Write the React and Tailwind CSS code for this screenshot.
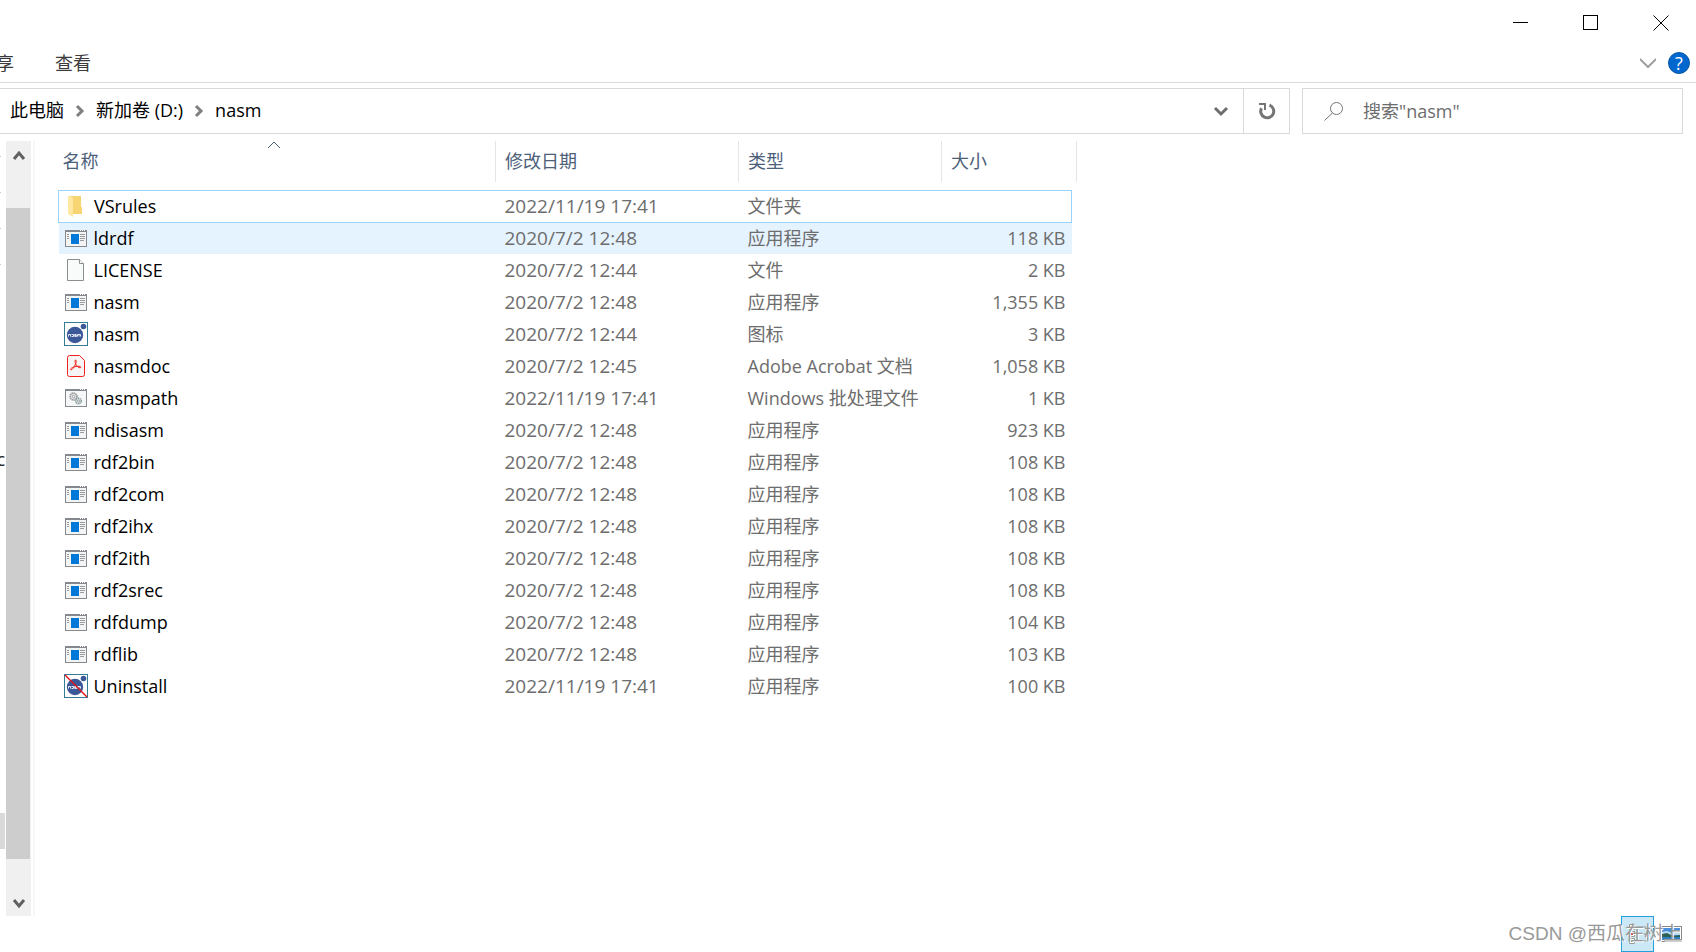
import React from 'react';

const files = [
  { name: 'VSrules', date: '2022/11/19 17:41', type: '文件夹', size: '', icon: 'folder', state: 'focused' },
  { name: 'ldrdf', date: '2020/7/2 12:48', type: '应用程序', size: '118 KB', icon: 'app', state: 'hovered' },
  { name: 'LICENSE', date: '2020/7/2 12:44', type: '文件', size: '2 KB', icon: 'file' },
  { name: 'nasm', date: '2020/7/2 12:48', type: '应用程序', size: '1,355 KB', icon: 'app' },
  { name: 'nasm', date: '2020/7/2 12:44', type: '图标', size: '3 KB', icon: 'nasm' },
  { name: 'nasmdoc', date: '2020/7/2 12:45', type: 'Adobe Acrobat 文档', size: '1,058 KB', icon: 'pdf' },
  { name: 'nasmpath', date: '2022/11/19 17:41', type: 'Windows 批处理文件', size: '1 KB', icon: 'batch' },
  { name: 'ndisasm', date: '2020/7/2 12:48', type: '应用程序', size: '923 KB', icon: 'app' },
  { name: 'rdf2bin', date: '2020/7/2 12:48', type: '应用程序', size: '108 KB', icon: 'app' },
  { name: 'rdf2com', date: '2020/7/2 12:48', type: '应用程序', size: '108 KB', icon: 'app' },
  { name: 'rdf2ihx', date: '2020/7/2 12:48', type: '应用程序', size: '108 KB', icon: 'app' },
  { name: 'rdf2ith', date: '2020/7/2 12:48', type: '应用程序', size: '108 KB', icon: 'app' },
  { name: 'rdf2srec', date: '2020/7/2 12:48', type: '应用程序', size: '108 KB', icon: 'app' },
  { name: 'rdfdump', date: '2020/7/2 12:48', type: '应用程序', size: '104 KB', icon: 'app' },
  { name: 'rdflib', date: '2020/7/2 12:48', type: '应用程序', size: '103 KB', icon: 'app' },
  { name: 'Uninstall', date: '2022/11/19 17:41', type: '应用程序', size: '100 KB', icon: 'uninstall' },
];

const FileIcon = ({ kind }) => (
  <svg width="24" height="24" viewBox="0 0 24 24" className="shrink-0" aria-hidden="true">
    {kind === 'folder' && (
      <>
        <path d="M4 2h13v11h1v7H8V4z" fill="#f7d572" />
        <path d="M4 2l5 2v19l-5-3z" fill="#ffe8a2" />
      </>
    )}
    {kind === 'app' && (
      <>
        <rect x="1.500" y="4.500" width="21" height="16" fill="#f4f4f4" stroke="#85888c" />
        <path d="M1 4h22v2H1z" fill="#85888c" />
        <path d="M16 4.500h1m1 0h1m1 0h1" stroke="#fff" />
        <path d="M7 8h8v10H7z" fill="#0078d7" />
        <path d="M3 8.500h2m-2 2h2m-2 2h2M16 8.500h5m-5 2h5m-5 2h5m-5 2h4" stroke="#9a9da0" />
      </>
    )}
    {kind === 'file' && (
      <>
        <path d="M3.500 1.500h12l4 4v17h-16z" fill="#f9fafa" stroke="#8b8e91" />
        <path d="M15.500 1.500v4h4" fill="#fff" stroke="#8b8e91" />
      </>
    )}
    {(kind === 'nasm' || kind === 'uninstall') && (
      <>
        <rect x="0.500" y="0.500" width="23" height="23" fill="#fff" stroke="#357b92" />
        <circle cx="11" cy="13" r="8.200" fill="#3b5998" />
        <circle cx="19.500" cy="4.500" r="2.800" fill="#3b5998" />
        <path d="M4.500 14.500v-2h2v2m1-2h2v2h-2m5-2h-2v1h2v1h-2m3 0v-2h3v2m-1.500 0v-2" fill="none" stroke="#e6e9f2" />
        {kind === 'uninstall' && <path d="M1 1l22 22" stroke="#e8141c" strokeWidth="1.500" />}
      </>
    )}
    {kind === 'pdf' && (
      <>
        <path d="M5.500 1.500h10l5 5v14a2 2 0 0 1-2 2h-13a2 2 0 0 1-2-2v-17a2 2 0 0 1 2-2z" fill="#f6f4f4" stroke="#f2211b" />
        <path d="M11.500 6c2 0-.5 7-3.500 9.500-1.500 1-2.500-.5.500-2 3-1.300 6.500-1.700 8-.8 1.500 1.300-2 1.800-4-1.200-1.300-2-2-5.500-1-5.500z" fill="none" stroke="#f2211b" />
      </>
    )}
    {kind === 'batch' && (
      <>
        <rect x="1.500" y="3.500" width="21" height="17" fill="#f6f7f7" stroke="#85888c" />
        <path d="M1 3h22v2H1z" fill="#85888c" />
        <path d="M16 3.500h1m1 0h1m1 0h1" stroke="#fff" />
        <circle cx="9.500" cy="10.500" r="3.500" fill="#e3e5e6" stroke="#8f9396" strokeWidth="1.500" strokeDasharray="1.400 .6" />
        <circle cx="9.500" cy="10.500" r="1.300" fill="#fff" stroke="#9a9da0" />
        <circle cx="14.500" cy="15" r="2.800" fill="#dfeaec" stroke="#8a9da0" strokeWidth="1.500" strokeDasharray="1.400 .6" />
        <circle cx="14.500" cy="15" r="1" fill="#fff" stroke="#9a9da0" />
      </>
    )}
  </svg>
);

const Chevron = ({ d, className, width = 3 }) => (
  <svg width="16" height="16" viewBox="0 0 16 16" className={className} fill="none" stroke="currentColor" strokeWidth={width} aria-hidden="true">
    <path d={d} />
  </svg>
);

const TitleBar = () => (
  <header className="flex h-11 justify-end pt-px">
    <button aria-label="最小化" className="flex w-[70px] items-center justify-center">
      <svg width="16" height="16" stroke="#000"><path d="M0 7.500h15" /></svg>
    </button>
    <button aria-label="最大化" className="flex w-[70px] items-center justify-center">
      <svg width="16" height="16" stroke="#000" fill="none"><rect x="0.500" y="0.500" width="14" height="14" /></svg>
    </button>
    <button aria-label="关闭" className="flex w-[70px] items-center justify-center">
      <svg width="16" height="16" stroke="#000"><path d="M.5.500l15 15m0-15l-15 15" /></svg>
    </button>
  </header>
);

const Ribbon = () => (
  <nav className="flex h-[39px] items-center justify-between border-b border-[#dadbdc] pr-1.5 text-[#3b3b3b]">
    <div className="flex">
      <button className="-ml-1 w-[18px]"><span className="flex justify-end">享</span></button>
      <button className="ml-[41px]">查看</button>
    </div>
    <div className="flex items-center gap-3">
      <button aria-label="展开功能区" className="text-[#a0a0a0]">
        <Chevron d="M0 4l8 8 8-8" width={2} />
      </button>
      <button aria-label="帮助" className="flex size-[22px] items-center justify-center rounded-full border border-[#0a57a5] bg-[#0067cf] text-white">?</button>
    </div>
  </nav>
);

const AddressBar = () => (
  <div className="flex gap-3 pt-[5px] pr-[13px]">
    <div className="flex h-[46px] flex-1 border border-l-0 border-[#d9d9d9]">
      <div className="flex flex-1 items-center gap-2 pb-0.5 pl-2.5">
        <button>此电脑</button>
        <Chevron d="M5 4l5 5-5 5" className="text-[#808080]" />
        <button>新加卷 (D:)</button>
        <Chevron d="M5 4l5 5-5 5" className="text-[#808080]" />
        <button>nasm</button>
      </div>
      <button aria-label="历史记录" className="flex w-11 items-center justify-center text-[#6e6e6e]">
        <Chevron d="M2 5l6 6 6-6" />
      </button>
      <button aria-label="刷新" className="flex w-[46px] items-center justify-center border-l border-[#d9d9d9]">
        <svg width="18" height="18" fill="none" stroke="#757575" strokeWidth="3">
          <path d="M11.500 3.200a6.500 6.500 0 1 1-8 3" />
          <path d="M1 2h6v6" strokeWidth="2" />
        </svg>
      </button>
    </div>
    <label className="flex h-[46px] w-[381px] items-center gap-[19px] border border-[#d9d9d9] pl-[21px]">
      <svg width="20" height="20" fill="none" stroke="#757575" aria-hidden="true">
        <circle cx="12.500" cy="7.500" r="6" />
        <path d="M8.500 12l-8 7.500" />
      </svg>
      <input aria-label="搜索" placeholder={'搜索"nasm"'} className="min-w-0 flex-1 outline-none placeholder:text-[#6d6d6d]" />
    </label>
  </div>
);

const NavPane = () => (
  <aside className="flex w-[35px] shrink-0 justify-between border-r-2 border-[#f7f7f7]">
    <div className="flex w-[5px] flex-col overflow-hidden">
      <div className="flex flex-col gap-[35px] pt-[15px]">
        <i className="h-px w-px bg-[#c8c8c8]" />
        <i className="h-px w-px bg-[#c8c8c8]" />
        <i className="h-px w-px bg-[#c8c8c8]" />
        <i className="h-px w-px bg-[#c8c8c8]" />
      </div>
      <span className="mt-[182px] flex h-6 justify-end text-[#222]">c</span>
      <div className="mt-[342px] h-9 bg-[#d9d9d9]" />
    </div>
    <div className="mr-0.5 flex w-[25px] flex-col bg-[#f0f0f0] text-[#606060]">
      <button aria-label="向上滚动" className="flex h-[67px] justify-center pt-1.5">
        <Chevron d="M3 12l5-6 5 6" />
      </button>
      <div className="mr-px flex-1 bg-[#cdcdcd]" />
      <button aria-label="向下滚动" className="flex h-[57px] items-end justify-center pb-1">
        <Chevron d="M3 4l5 6 5-6" />
      </button>
    </div>
  </aside>
);

const rowStyles = {
  focused: '[&>td]:border-y [&>td]:border-[#99d1ff] [&>td:first-child]:border-l [&>td:last-child]:border-r',
  hovered: '[&>td]:bg-[#e5f3ff]',
};

const FileList = () => (
  <table className="w-[1018px] table-fixed self-start text-left text-[#6d6d6d]">
    <colgroup>
      <col className="w-[437px]" />
      <col className="w-[243px]" />
      <col className="w-[203px]" />
      <col className="w-[130px]" />
      <col className="w-[5px]" />
    </colgroup>
    <thead className="text-[#4c607a]">
      <tr className="h-[41px]">
        <th className="relative border-r border-[#e5e5e5] p-0 pb-0.5 pl-1 font-normal">
          名称
          <Chevron d="M2 7l6-6 6 6" width={1} className="absolute top-0 left-[207px]" />
        </th>
        <th className="border-r border-[#e5e5e5] p-0 pb-0.5 pl-[9px] font-normal">修改日期</th>
        <th className="border-r border-[#e5e5e5] p-0 pb-0.5 pl-[9px] font-normal">类型</th>
        <th colSpan={2} className="border-r border-[#e5e5e5] p-0 pb-0.5 pl-[9px] font-normal">大小</th>
      </tr>
    </thead>
    <tbody>
      <tr className="h-2"><td colSpan={5} className="p-0" /></tr>
      {files.map((file) => (
        <tr key={file.name + file.type} className={`h-8 ${rowStyles[file.state] || ''}`}>
          <td className="p-0">
            <div className="flex h-[30px] items-center gap-1.5 pl-[5px] text-black">
              <FileIcon kind={file.icon} />
              {file.name}
            </div>
          </td>
          <td className="p-0 pl-[9px] text-[19px]">{file.date}</td>
          <td className="p-0 pl-[9px]">{file.type}</td>
          <td className="p-0 pr-1.5 text-right">{file.size}</td>
        </tr>
      ))}
    </tbody>
  </table>
);

const StatusBar = () => (
  <footer className="relative flex h-9 items-center justify-end gap-1.5 pr-3.5">
    <button aria-label="详细信息" className="flex h-9 w-[33px] items-center justify-center border border-[#26a0da] bg-[#cbe8f6]">
      <svg width="18" height="22" fill="#fff" stroke="#999">
        <path d="M.5 1.500h5v5h-5zM.5 8.500h5v5h-5zM.5 15.500h5v5h-5zM8 4h9M8 11h9M8 18h9" />
        <path d="M2 11h2" stroke="#d22" strokeWidth="2" />
        <path d="M2 18h2" stroke="#4a4" strokeWidth="2" />
      </svg>
    </button>
    <button aria-label="大图标">
      <svg width="22" height="16">
        <rect x="0.500" y="0.500" width="21" height="15" fill="#fff" stroke="#888" />
        <path d="M2 2h18v12H2z" fill="#4a90dc" />
        <path d="M2 6l5-1 5 2 8-2v4H2z" fill="#b9dcf5" />
        <path d="M2 8l5-1 6 3 7-1v2H2z" fill="#2d5f52" />
        <path d="M2 11h18v3H2z" fill="#2f7fc4" />
      </svg>
    </button>
    <span className="absolute right-3.5 bottom-1.5 font-['Liberation_Sans','Noto_Sans_CJK_SC',sans-serif] text-[19px] whitespace-nowrap text-[#999] [text-shadow:1px_1px_0_#fff]">CSDN @西瓜在树上</span>
  </footer>
);

const App = () => (
  <div className="flex min-h-screen flex-col overflow-hidden bg-white font-['Open_Sans','Noto_Sans_CJK_SC',sans-serif] text-lg leading-6 text-black">
    <TitleBar />
    <Ribbon />
    <AddressBar />
    <main className="flex flex-1 gap-[23px] pt-[7px]">
      <NavPane />
      <FileList />
    </main>
    <StatusBar />
  </div>
);

export default App;
